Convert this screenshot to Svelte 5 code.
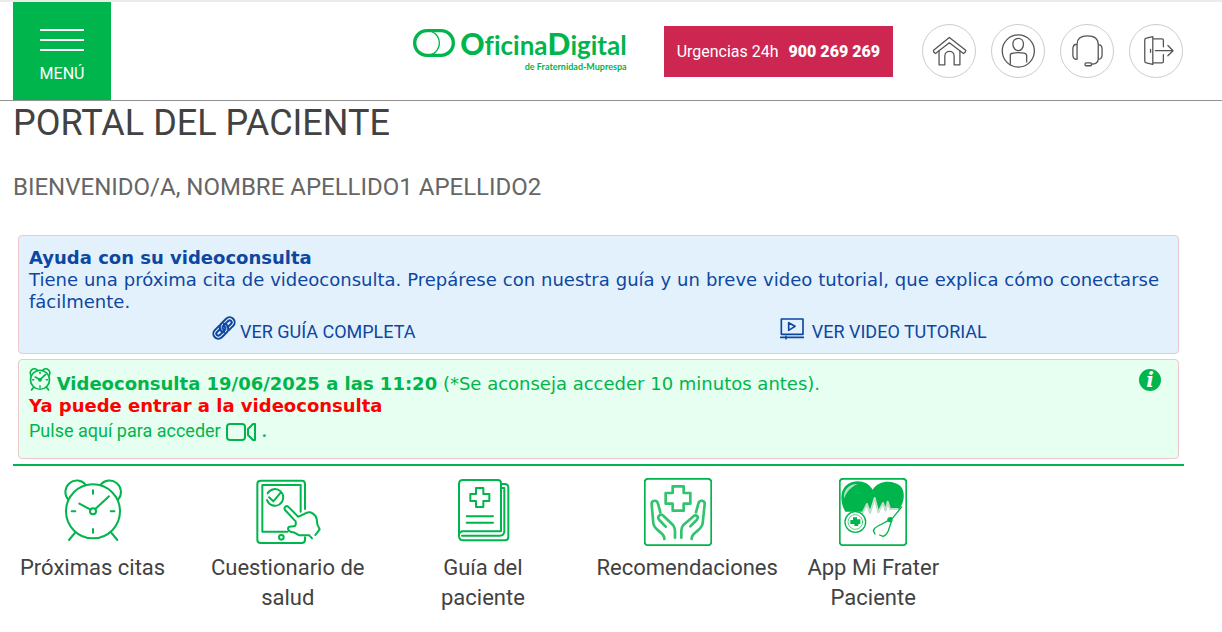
<script lang="ts">
  const cita = { fecha: "19/06/2025", hora: "11:20" };
  const telefono = "900 269 269";

  const accesos = [
    { id: "citas", titulo: "Próximas citas" },
    { id: "cuestionario", titulo: "Cuestionario de salud" },
    { id: "guia", titulo: "Guía del paciente" },
    { id: "recomendaciones", titulo: "Recomendaciones" },
    { id: "app", titulo: "App Mi Frater Paciente" },
  ];

  const cabecera = [
    { id: "inicio", titulo: "Inicio" },
    { id: "perfil", titulo: "Mi perfil" },
    { id: "ayuda", titulo: "Atención al usuario" },
    { id: "salir", titulo: "Cerrar sesión" },
  ];
</script>

<svelte:head>
  <title>Portal del paciente</title>
</svelte:head>

{#snippet reloj()}
  <svg class="icon" viewBox="56 54 204 204" aria-hidden="true">
    <circle cx="158" cy="154" r="81" />
    <circle cx="158" cy="154" r="9" />
    <path d="M83 118A34 34 0 1 1 136 74M181 74A34 34 0 1 1 234 118" />
    <path d="M151 149L117 131M165 147L206 109M158 91v10M158 207v11M94 154h11M211 154h11" />
    <path d="M105 217L86 240M212 217L231 240" />
  </svg>
{/snippet}

{#snippet iconoCabecera(id: string)}
  {#if id === "inicio"}
    <svg viewBox="36 42 162 162" aria-hidden="true">
      <path d="M118 81L69 121L69 126L75 131L118 97L162 131L168 126L169 121Z" />
      <path d="M86 123V166H104V139C104 119 133 119 133 139V166H151V123" />
    </svg>
  {:else if id === "perfil"}
    <svg viewBox="243 42 162 162" aria-hidden="true">
      <circle cx="325" cy="123" r="50" />
      <path d="M325 84C315 84 308 91 308 101C308 113 316 122 325 122C334 122 341 113 341 101C341 91 334 84 325 84Z" />
      <path d="M300 166V136C300 132 304 130 308 130Q325 126 343 130C347 131 351 133 351 138V157" />
    </svg>
  {:else if id === "ayuda"}
    <svg viewBox="450 42 162 162" aria-hidden="true">
      <path d="M500 149V102C500 85 511 76 532 76C554 76 566 86 566 103V149M500 102C491 102 487 108 487 117V136C487 145 492 149 500 149M566 103C574 103 578 108 578 117V134C578 143 574 149 566 149C565 158 558 164 545 164" />
      <rect x="525" y="160" width="20" height="9" rx="3" />
    </svg>
  {:else}
    <svg viewBox="657 42 162 162" aria-hidden="true">
      <path d="M728 78L708 83Q703 84 703 89V154Q703 159 708 160L728 165ZM728 85H757Q761 85 761 89V110M761 134V156Q761 160 757 160H728M721 118v9" />
      <path d="M736 122H791M775 106L791 122L775 138" />
    </svg>
  {/if}
{/snippet}

{#snippet iconoAcceso(id: string)}
  {#if id === "citas"}
    {@render reloj()}
  {:else if id === "cuestionario"}
    <svg class="icon" viewBox="41 39 204 204" aria-hidden="true">
      <path d="M194 132V57Q194 47 184 47H61Q51 47 51 57V224Q51 234 61 234H184Q194 234 194 224V217" />
      <path d="M181 140V60H66V200H142" />
      <path d="M82 85A25 25 0 1 1 80 105M86 97L99 109L121 83" />
      <circle cx="123" cy="217" r="7" />
      <path d="M166 169L134 135C129 126 139 119 146 127L173 155C184 153 198 140 210 142C227 147 231 160 231 178L238 193L225 210M166 169Q168 184 160 184L147 185C139 190 145 199 152 201C161 199 169 207 177 211H207L215 220" />
    </svg>
  {:else if id === "guia"}
    <svg class="icon" viewBox="56 39 204 204" aria-hidden="true">
      <path d="M86 212V57Q86 45 98 45H202Q212 45 212 55V199H99Q86 199 86 212Q86 226 99 226H224Q234 226 234 216V68Q234 57 223 57H212" />
      <path d="M213 69H222V198Q222 212 208 212H95" />
      <path d="M137 69H159V87H177V108H159V126H137V108H120V87H137Z" />
      <path d="M109 154H188M109 173H188" />
    </svg>
  {:else if id === "recomendaciones"}
    <svg class="icon" viewBox="45 39 204 204" aria-hidden="true">
      <rect x="47" y="41" width="200" height="200" rx="11" />
      <g class="soft">
        <path d="M131 64H164V84H184V116H164V137H131V116H110V84H131Z" />
        <path d="M106 222C108 210 97 206 86 195Q74 184 73 175L68 118C67 105 84 103 87 116L94 142M138 218V197Q138 188 132 180L103 152C93 144 83 156 91 165L110 185" />
        <path d="M188 222C186 210 197 206 208 195Q220 184 221 175L227 118C228 105 211 103 208 116L201 142M157 218V197Q157 188 163 180L192 155C202 145 211 156 203 165L184 184" />
      </g>
    </svg>
  {:else}
    <svg class="icon" viewBox="45 39 204 204" aria-hidden="true">
      <rect x="47" y="41" width="200" height="200" rx="11" />
      <path class="fill" d="M146 74C131 48 97 42 72 57C47 73 47 112 64 140H119L129 116L138 136L153 99L163 135L176 117L183 133L191 110L198 131L226 133C241 112 245 82 230 64C207 43 163 46 146 74Z" />
      <path class="shade" d="M60 101C57 75 75 56 101 57C82 65 68 79 60 101Z" />
      <path class="grey" d="M115 145L129 117L138 144L152 99L163 142L177 114L185 137L191 110L198 132H221" />
      <path class="disc" d="M125 171A31 31 0 1 1 63 171A31 31 0 1 1 125 171Z" />
      <circle class="thin" cx="94" cy="171" r="22" />
      <path class="fill" d="M87 157H99V163H109V177H103V183H91V177H79V165H87Z" />
      <path class="fill" d="M190 161Q194 154 203 157Q209 162 204 171L196 172Q188 169 190 161Z" />
      <path class="tube" d="M233 126L205 160M193 167L162 183Q151 188 148 197L153 207M202 170L193 197Q187 211 177 214L167 210" />
    </svg>
  {/if}
{/snippet}

<header>
  <button type="button" class="menu">
    <span class="bars"><i></i><i></i><i></i></span>
    <span>MENÚ</span>
  </button>

  <a class="logo" href="#inicio">
    <svg viewBox="0 0 126 84" aria-hidden="true">
      <rect x="5" y="5" width="116" height="74" rx="37" />
      <path class="ring" d="M42 5A37 37 0 0 1 42 79" />
    </svg>
    <span class="brand">
      <span class="name"><b>O</b>ficina<b>D</b>igital</span>
      <span class="owner">de Fraternidad-Muprespa</span>
    </span>
  </a>

  <a class="urgent" href="tel:900269269">Urgencias 24h <strong>{telefono}</strong></a>

  <nav aria-label="Accesos de usuario">
    {#each cabecera as item (item.id)}
      <a href="#{item.id}" aria-label={item.titulo}>{@render iconoCabecera(item.id)}</a>
    {/each}
  </nav>
</header>

<main>
  <h1>PORTAL DEL PACIENTE</h1>
  <h2>BIENVENIDO/A, NOMBRE APELLIDO1 APELLIDO2</h2>

  <section class="box help">
    <strong>Ayuda con su videoconsulta</strong>
    <p>Tiene una próxima cita de videoconsulta. Prepárese con nuestra guía y un breve video tutorial, que explica cómo conectarse fácilmente.</p>
    <div class="links">
      <a href="#guia-completa">
        <svg viewBox="0 0 24 24" aria-hidden="true">
          <g transform="rotate(-45 12 12)">
            <path d="M10 7H4A5 5 0 0 0 4 17H11A5 5 0 0 0 15 9M9 10H4A2 2 0 0 0 4 14H11A2 2 0 0 0 13 11L15 9" />
            <path d="M14 17H20A5 5 0 0 0 20 7H13A5 5 0 0 0 9 15M15 14H20A2 2 0 0 0 20 10H13A2 2 0 0 0 11 13L9 15" />
          </g>
        </svg>
        VER GUÍA COMPLETA
      </a>
      <a class="tutorial" href="#tutorial">
        <svg viewBox="61 272 72 72" aria-hidden="true">
          <path class="wide" d="M65 281H130V327H65ZM87 292L106 303L87 315ZM63 336H132M79 333V340" />
        </svg>
        VER VIDEO TUTORIAL
      </a>
    </div>
  </section>

  <section class="box visit">
    <div class="text">
      <p class="when">{@render reloj()} <strong>Videoconsulta {cita.fecha} a las {cita.hora}</strong> (*Se aconseja acceder 10 minutos antes).</p>
      <p class="ready">Ya puede entrar a la videoconsulta</p>
      <p class="enter">
        <a href="#videoconsulta">Pulse aquí para acceder
          <svg viewBox="0 0 32 20" aria-hidden="true">
            <rect x="2" y="2" width="18" height="16" rx="3" />
            <path d="M30 2H28L23 7V13L28 18H30Z" />
          </svg></a>
        <b>.</b>
      </p>
    </div>
    <button type="button" class="info" aria-label="Información">i</button>
  </section>

  <nav class="shortcuts" aria-label="Accesos directos">
    <ul>
      {#each accesos as acceso (acceso.id)}
        <li>
          <a href="#{acceso.id}">
            {@render iconoAcceso(acceso.id)}
            <span>{acceso.titulo}</span>
          </a>
        </li>
      {/each}
    </ul>
  </nav>
</main>

<style>
  :global(body) {
    margin: 0;
    background: #fff;
    color: #424242;
    font-family: Roboto, "Liberation Sans", sans-serif;
  }
  svg {
    fill: none;
    stroke: currentColor;
    stroke-linecap: round;
    stroke-linejoin: round;
  }
  a {
    color: inherit;
    text-decoration: none;
  }
  button {
    padding: 0;
    border: 0;
    font: inherit;
    cursor: pointer;
  }
  header {
    display: flex;
    align-items: center;
    padding: 0 39px 0 13px;
    border-top: 2px solid #ebebeb;
    border-bottom: 1px solid #919191;
  }
  .menu {
    display: flex;
    flex-direction: column;
    align-items: center;
    gap: 13px;
    box-sizing: border-box;
    width: 98px;
    height: 98px;
    margin-right: auto;
    padding-top: 27px;
    background: #00b54b;
    color: #fff;
    font-size: 16px;
    line-height: 20px;
  }
  .bars {
    display: grid;
    gap: 8px;
    width: 44px;
  }
  .bars i {
    height: 2px;
    background: #fff;
  }
  .logo {
    display: flex;
    gap: 5px;
    color: #00b54b;
  }
  .logo svg {
    width: 42px;
    height: 28px;
    margin-top: 1px;
    stroke-width: 10;
  }
  .logo .ring { stroke-width: 4; }
  .brand {
    display: flex;
    flex-direction: column;
    font-family: Lato, "Open Sans", sans-serif;
    font-weight: 700;
    font-variant-ligatures: none;
  }
  .name {
    font-size: 26px;
    line-height: 30px;
  }
  .name b {
    font-size: 30px;
    font-weight: 900;
  }
  .owner {
    font-size: 9px;
    line-height: 14px;
    text-align: right;
  }
  .urgent {
    margin: 0 29px 0 37px;
    padding: 0 13px;
    background: #cd2651;
    color: #fff;
    font-size: 16px;
    line-height: 51px;
    white-space: nowrap;
  }
  .urgent strong {
    margin-left: 6px;
    font-weight: 900;
  }
  header nav {
    display: flex;
    gap: 15px;
  }
  header nav a {
    box-sizing: border-box;
    width: 54px;
    height: 54px;
    border: 1px solid #ccc;
    border-radius: 50%;
    color: #555;
  }
  header nav svg {
    display: block;
    stroke-width: 4;
  }
  main {
    padding: 0 38px 0 13px;
  }
  h1, h2, p, ul {
    margin: 0;
    font-weight: 400;
  }
  h1 {
    font-size: 36px;
    line-height: 44px;
  }
  h2 {
    margin: 28px 0 34px;
    color: #666;
    font-size: 24px;
    line-height: 28px;
  }
  .box {
    margin: 0 5px 5px;
    border: 1px solid #ebc8cc;
    border-radius: 4px;
    font-family: Verdana, "DejaVu Sans", sans-serif;
    font-size: 18px;
    line-height: 22px;
  }
  .help {
    padding: 11px 10px 5px;
    background: #e3f1fd;
    color: #0d47a1;
  }
  .help p {
    padding-right: 9px;
    text-align: justify;
  }
  .links {
    display: grid;
    grid-template-columns: 1fr 1fr;
  }
  .links a {
    display: flex;
    align-items: center;
    justify-content: center;
    gap: 4px;
    padding-top: 3px;
    font-family: Roboto, sans-serif;
    line-height: 32px;
  }
  .links .tutorial { gap: 8px; }
  .links svg {
    width: 24px;
    height: 24px;
    margin-bottom: 8px;
    stroke-width: 2;
  }
  .links .wide { stroke-width: 5; }
  .visit {
    display: flex;
    justify-content: space-between;
    padding: 8px 17px 16px 10px;
    background: #e6fff0;
    color: #00b54b;
  }
  .icon {
    width: 68px;
    height: 68px;
    stroke-width: 6;
  }
  .when .icon {
    width: 24px;
    height: 24px;
    margin: 0 -1px;
    vertical-align: -2px;
    stroke-width: 14;
  }
  .ready {
    color: #f00;
    font-weight: 700;
  }
  .enter {
    margin-top: 3px;
    font-family: Roboto, sans-serif;
  }
  .enter svg {
    width: 32px;
    height: 20px;
    vertical-align: -5px;
    stroke-width: 2;
  }
  .info {
    width: 22px;
    height: 22px;
    margin-top: 1px;
    border-radius: 50%;
    background: #00b54b;
    color: #fff;
    font: italic 700 20px/22px "DejaVu Serif", serif;
  }
  .shortcuts {
    padding-top: 12px;
    border-top: 2px solid #00b54b;
  }
  .shortcuts ul {
    display: grid;
    grid-template-columns: repeat(6, minmax(0, 1fr));
    margin: 0 18px 0 -18px;
    padding: 0;
    list-style: none;
  }
  .shortcuts li {
    padding: 0 16px;
    font-size: 22px;
    line-height: 30px;
    text-align: center;
  }
  .shortcuts .icon {
    display: block;
    margin: 0 auto 7px;
    color: #00b54b;
  }
  .soft {
    opacity: .8;
    stroke-width: 8;
  }
  .fill {
    fill: #00b54b;
    stroke: none;
  }
  .shade {
    fill: #a6e5bf;
    stroke: none;
  }
  .grey { stroke: #c3dccb; }
  .disc {
    fill: #fff;
    stroke-width: 4;
  }
  .thin { stroke-width: 2; }
  .tube { stroke-width: 4; }
</style>
